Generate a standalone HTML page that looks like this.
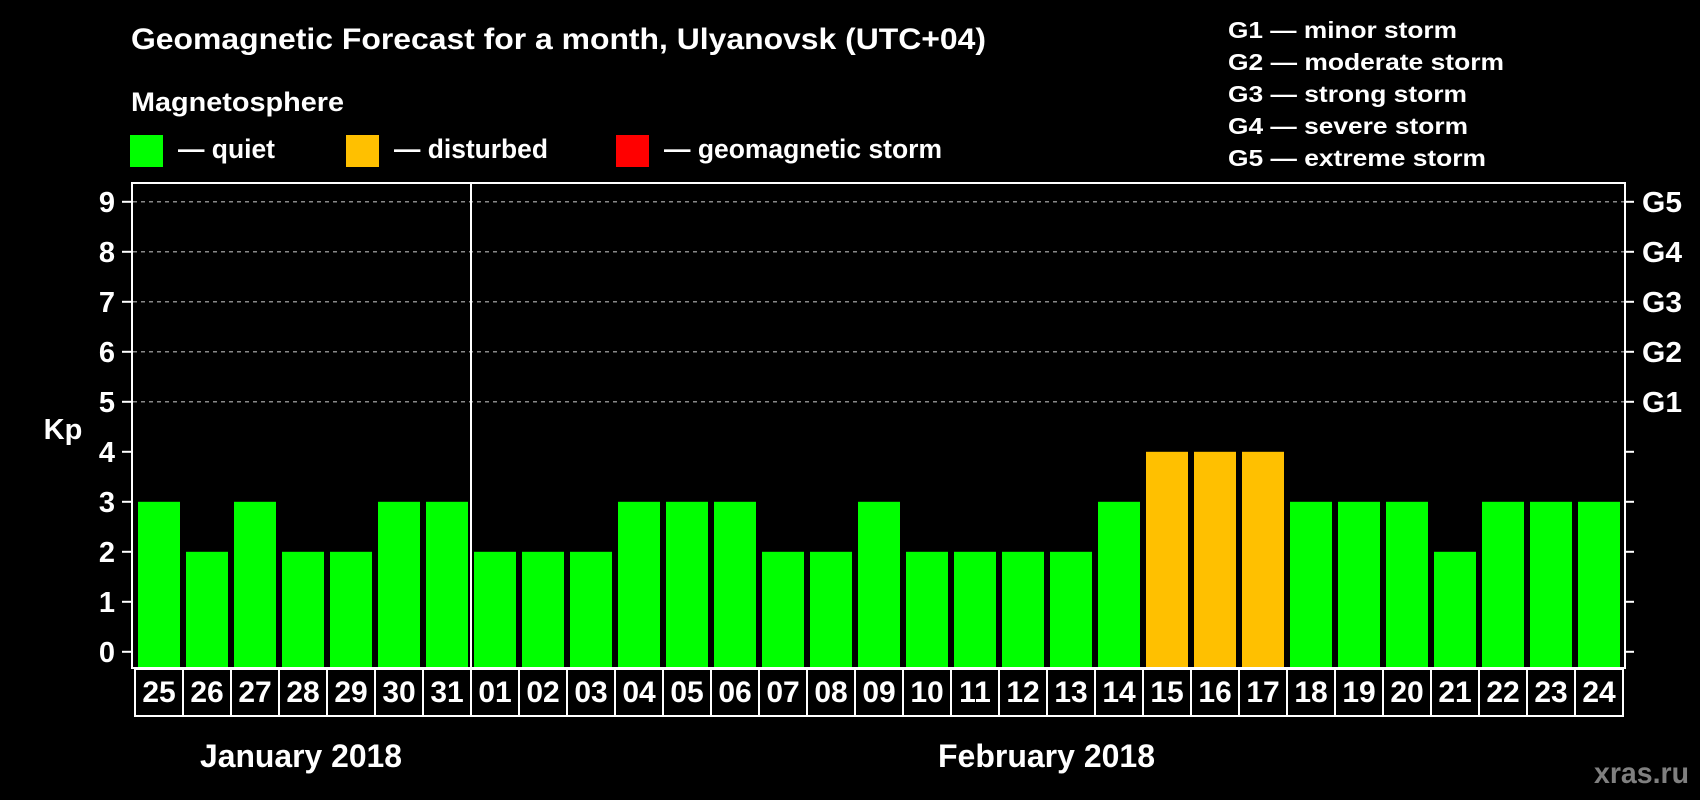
<!DOCTYPE html>
<html><head><meta charset="utf-8"><style>
html,body{margin:0;padding:0;background:#000;width:1700px;height:800px;overflow:hidden}
svg{display:block}
text{font-family:"Liberation Sans",Arial,sans-serif;font-weight:bold;fill:#fff}
</style></head><body>
<svg width="1700" height="800" viewBox="0 0 1700 800" xmlns="http://www.w3.org/2000/svg">
<rect width="1700" height="800" fill="#000"/>
<text x="131" y="49" font-size="30" textLength="855" lengthAdjust="spacingAndGlyphs">Geomagnetic Forecast for a month, Ulyanovsk (UTC+04)</text>
<text x="131" y="111" font-size="27" textLength="213" lengthAdjust="spacingAndGlyphs">Magnetosphere</text>
<rect x="130" y="135" width="33" height="32" fill="#00ff00"/>
<rect x="346" y="135" width="33" height="32" fill="#ffc000"/>
<rect x="616" y="135" width="33" height="32" fill="#ff0000"/>
<text x="178" y="158" font-size="27" textLength="97" lengthAdjust="spacingAndGlyphs">— quiet</text>
<text x="394" y="158" font-size="27" textLength="154" lengthAdjust="spacingAndGlyphs">— disturbed</text>
<text x="664" y="158" font-size="27" textLength="278" lengthAdjust="spacingAndGlyphs">— geomagnetic storm</text>
<g font-size="23">
<text x="1228" y="38" textLength="229" lengthAdjust="spacingAndGlyphs">G1 — minor storm</text>
<text x="1228" y="70" textLength="276" lengthAdjust="spacingAndGlyphs">G2 — moderate storm</text>
<text x="1228" y="102" textLength="239" lengthAdjust="spacingAndGlyphs">G3 — strong storm</text>
<text x="1228" y="134" textLength="240" lengthAdjust="spacingAndGlyphs">G4 — severe storm</text>
<text x="1228" y="166" textLength="258" lengthAdjust="spacingAndGlyphs">G5 — extreme storm</text>
</g>
<g stroke="#888" stroke-width="1.5" stroke-dasharray="4 4">
<line x1="133" y1="201.8" x2="1624" y2="201.8"/>
<line x1="133" y1="251.8" x2="1624" y2="251.8"/>
<line x1="133" y1="301.8" x2="1624" y2="301.8"/>
<line x1="133" y1="351.8" x2="1624" y2="351.8"/>
<line x1="133" y1="401.8" x2="1624" y2="401.8"/>
</g>
<g id="bars">
<rect x="138" y="501.8" width="42" height="167" fill="#00ff00"/>
<rect x="186" y="551.8" width="42" height="117" fill="#00ff00"/>
<rect x="234" y="501.8" width="42" height="167" fill="#00ff00"/>
<rect x="282" y="551.8" width="42" height="117" fill="#00ff00"/>
<rect x="330" y="551.8" width="42" height="117" fill="#00ff00"/>
<rect x="378" y="501.8" width="42" height="167" fill="#00ff00"/>
<rect x="426" y="501.8" width="42" height="167" fill="#00ff00"/>
<rect x="474" y="551.8" width="42" height="117" fill="#00ff00"/>
<rect x="522" y="551.8" width="42" height="117" fill="#00ff00"/>
<rect x="570" y="551.8" width="42" height="117" fill="#00ff00"/>
<rect x="618" y="501.8" width="42" height="167" fill="#00ff00"/>
<rect x="666" y="501.8" width="42" height="167" fill="#00ff00"/>
<rect x="714" y="501.8" width="42" height="167" fill="#00ff00"/>
<rect x="762" y="551.8" width="42" height="117" fill="#00ff00"/>
<rect x="810" y="551.8" width="42" height="117" fill="#00ff00"/>
<rect x="858" y="501.8" width="42" height="167" fill="#00ff00"/>
<rect x="906" y="551.8" width="42" height="117" fill="#00ff00"/>
<rect x="954" y="551.8" width="42" height="117" fill="#00ff00"/>
<rect x="1002" y="551.8" width="42" height="117" fill="#00ff00"/>
<rect x="1050" y="551.8" width="42" height="117" fill="#00ff00"/>
<rect x="1098" y="501.8" width="42" height="167" fill="#00ff00"/>
<rect x="1146" y="451.8" width="42" height="217" fill="#ffc000"/>
<rect x="1194" y="451.8" width="42" height="217" fill="#ffc000"/>
<rect x="1242" y="451.8" width="42" height="217" fill="#ffc000"/>
<rect x="1290" y="501.8" width="42" height="167" fill="#00ff00"/>
<rect x="1338" y="501.8" width="42" height="167" fill="#00ff00"/>
<rect x="1386" y="501.8" width="42" height="167" fill="#00ff00"/>
<rect x="1434" y="551.8" width="42" height="117" fill="#00ff00"/>
<rect x="1482" y="501.8" width="42" height="167" fill="#00ff00"/>
<rect x="1530" y="501.8" width="42" height="167" fill="#00ff00"/>
<rect x="1578" y="501.8" width="42" height="167" fill="#00ff00"/>
</g>
<rect x="132" y="183" width="1493" height="485" fill="none" stroke="#fff" stroke-width="2"/>
<line x1="471" y1="183" x2="471" y2="668" stroke="#fff" stroke-width="2"/>
<g stroke="#fff" stroke-width="2">
<line x1="122" y1="201.8" x2="131" y2="201.8"/><line x1="122" y1="251.8" x2="131" y2="251.8"/><line x1="122" y1="301.8" x2="131" y2="301.8"/><line x1="122" y1="351.8" x2="131" y2="351.8"/><line x1="122" y1="401.8" x2="131" y2="401.8"/><line x1="122" y1="451.8" x2="131" y2="451.8"/><line x1="122" y1="501.8" x2="131" y2="501.8"/><line x1="122" y1="551.8" x2="131" y2="551.8"/><line x1="122" y1="601.8" x2="131" y2="601.8"/><line x1="122" y1="651.8" x2="131" y2="651.8"/>
<line x1="1625" y1="201.8" x2="1634" y2="201.8"/><line x1="1625" y1="251.8" x2="1634" y2="251.8"/><line x1="1625" y1="301.8" x2="1634" y2="301.8"/><line x1="1625" y1="351.8" x2="1634" y2="351.8"/><line x1="1625" y1="401.8" x2="1634" y2="401.8"/><line x1="1625" y1="451.8" x2="1634" y2="451.8"/><line x1="1625" y1="501.8" x2="1634" y2="501.8"/><line x1="1625" y1="551.8" x2="1634" y2="551.8"/><line x1="1625" y1="601.8" x2="1634" y2="601.8"/><line x1="1625" y1="651.8" x2="1634" y2="651.8"/>
</g>
<g font-size="29" text-anchor="middle">
<text x="107" y="212">9</text><text x="107" y="262">8</text><text x="107" y="312">7</text><text x="107" y="362">6</text><text x="107" y="412">5</text><text x="107" y="462">4</text><text x="107" y="512">3</text><text x="107" y="562">2</text><text x="107" y="612">1</text><text x="107" y="662">0</text>
<text x="63" y="439">Kp</text>
</g>
<g font-size="29">
<text x="1642" y="212" textLength="40" lengthAdjust="spacingAndGlyphs">G5</text><text x="1642" y="262" textLength="40" lengthAdjust="spacingAndGlyphs">G4</text><text x="1642" y="312" textLength="40" lengthAdjust="spacingAndGlyphs">G3</text><text x="1642" y="362" textLength="40" lengthAdjust="spacingAndGlyphs">G2</text><text x="1642" y="412" textLength="40" lengthAdjust="spacingAndGlyphs">G1</text>
</g>
<rect x="135" y="669" width="1488" height="47" fill="none" stroke="#fff" stroke-width="2"/>
<g stroke="#fff" stroke-width="2">
<line x1="183" y1="669" x2="183" y2="716"/><line x1="231" y1="669" x2="231" y2="716"/><line x1="279" y1="669" x2="279" y2="716"/><line x1="327" y1="669" x2="327" y2="716"/><line x1="375" y1="669" x2="375" y2="716"/><line x1="423" y1="669" x2="423" y2="716"/><line x1="471" y1="669" x2="471" y2="716"/><line x1="519" y1="669" x2="519" y2="716"/><line x1="567" y1="669" x2="567" y2="716"/><line x1="615" y1="669" x2="615" y2="716"/><line x1="663" y1="669" x2="663" y2="716"/><line x1="711" y1="669" x2="711" y2="716"/><line x1="759" y1="669" x2="759" y2="716"/><line x1="807" y1="669" x2="807" y2="716"/><line x1="855" y1="669" x2="855" y2="716"/><line x1="903" y1="669" x2="903" y2="716"/><line x1="951" y1="669" x2="951" y2="716"/><line x1="999" y1="669" x2="999" y2="716"/><line x1="1047" y1="669" x2="1047" y2="716"/><line x1="1095" y1="669" x2="1095" y2="716"/><line x1="1143" y1="669" x2="1143" y2="716"/><line x1="1191" y1="669" x2="1191" y2="716"/><line x1="1239" y1="669" x2="1239" y2="716"/><line x1="1287" y1="669" x2="1287" y2="716"/><line x1="1335" y1="669" x2="1335" y2="716"/><line x1="1383" y1="669" x2="1383" y2="716"/><line x1="1431" y1="669" x2="1431" y2="716"/><line x1="1479" y1="669" x2="1479" y2="716"/><line x1="1527" y1="669" x2="1527" y2="716"/><line x1="1575" y1="669" x2="1575" y2="716"/>
</g>
<g font-size="30" text-anchor="middle">
<text x="159" y="702">25</text><text x="207" y="702">26</text><text x="255" y="702">27</text><text x="303" y="702">28</text><text x="351" y="702">29</text><text x="399" y="702">30</text><text x="447" y="702">31</text>
<text x="495" y="702">01</text><text x="543" y="702">02</text><text x="591" y="702">03</text><text x="639" y="702">04</text><text x="687" y="702">05</text><text x="735" y="702">06</text><text x="783" y="702">07</text><text x="831" y="702">08</text><text x="879" y="702">09</text><text x="927" y="702">10</text><text x="975" y="702">11</text><text x="1023" y="702">12</text><text x="1071" y="702">13</text><text x="1119" y="702">14</text><text x="1167" y="702">15</text><text x="1215" y="702">16</text><text x="1263" y="702">17</text><text x="1311" y="702">18</text><text x="1359" y="702">19</text><text x="1407" y="702">20</text><text x="1455" y="702">21</text><text x="1503" y="702">22</text><text x="1551" y="702">23</text><text x="1599" y="702">24</text>
</g>
<text x="200" y="767" font-size="32" textLength="202" lengthAdjust="spacingAndGlyphs">January 2018</text>
<text x="938" y="767" font-size="32" textLength="217" lengthAdjust="spacingAndGlyphs">February 2018</text>
<text x="1594" y="783" font-size="30" style="fill:#808080" textLength="95" lengthAdjust="spacingAndGlyphs">xras.ru</text>
</svg>
</body></html>
